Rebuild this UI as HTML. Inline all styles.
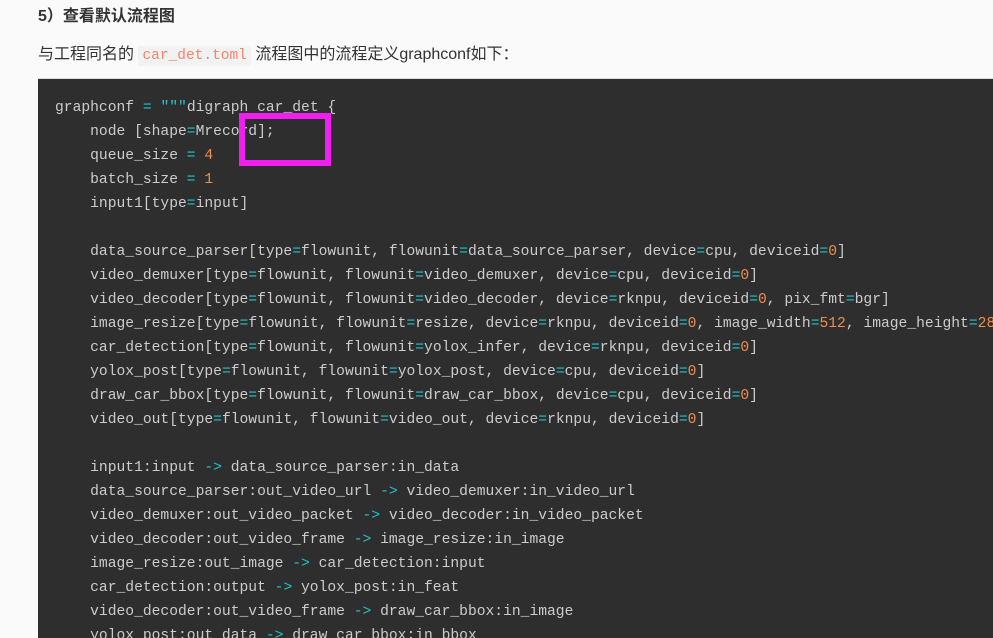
<!DOCTYPE html>
<html><head><meta charset="utf-8"><style>
html,body{margin:0;width:993px;height:638px;overflow:hidden}
body{background:#fafafa;font-family:"Liberation Sans","Noto Sans CJK SC",sans-serif;position:relative}
h4{position:absolute;left:38px;top:5px;margin:0;font-size:16px;font-weight:bold;color:#333;line-height:24px}
p{position:absolute;left:38px;top:43px;margin:0;font-size:16px;color:#333;line-height:24px}
p code{font-family:"Liberation Mono",monospace;color:#f5846a;background:#f2f2f2;padding:2px 4px;font-size:14.5px}
pre{position:absolute;left:38px;top:78px;width:960px;height:560px;margin:0;background:#2e2e2e;border-top:1px solid #ddd;padding:17px 0 0 17px;box-sizing:border-box;font-family:"Liberation Mono",monospace;font-size:14.65px;line-height:24px;color:#cccccc;white-space:pre;overflow:hidden}
.o{color:#f08d49}.t{color:#1fc6c6}
.box{position:absolute;left:239px;top:113px;width:80px;height:41px;border:6px solid #f01ff0}
</style></head><body>
<h4>5）查看默认流程图</h4>
<p>与工程同名的 <code>car_det.toml</code> 流程图中的流程定义graphconf如下：</p>
<pre>graphconf <span class="t">=</span> <span class="t">"""</span>digraph car_det {
    node [shape<span class="t">=</span>Mrecord];
    queue_size <span class="t">=</span> <span class="o">4</span>
    batch_size <span class="t">=</span> <span class="o">1</span>
    input1[type<span class="t">=</span>input]

    data_source_parser[type<span class="t">=</span>flowunit, flowunit<span class="t">=</span>data_source_parser, device<span class="t">=</span>cpu, deviceid<span class="t">=</span><span class="o">0</span>]
    video_demuxer[type<span class="t">=</span>flowunit, flowunit<span class="t">=</span>video_demuxer, device<span class="t">=</span>cpu, deviceid<span class="t">=</span><span class="o">0</span>]
    video_decoder[type<span class="t">=</span>flowunit, flowunit<span class="t">=</span>video_decoder, device<span class="t">=</span>rknpu, deviceid<span class="t">=</span><span class="o">0</span>, pix_fmt<span class="t">=</span>bgr]
    image_resize[type<span class="t">=</span>flowunit, flowunit<span class="t">=</span>resize, device<span class="t">=</span>rknpu, deviceid<span class="t">=</span><span class="o">0</span>, image_width<span class="t">=</span><span class="o">512</span>, image_height<span class="t">=</span><span class="o">288</span>]
    car_detection[type<span class="t">=</span>flowunit, flowunit<span class="t">=</span>yolox_infer, device<span class="t">=</span>rknpu, deviceid<span class="t">=</span><span class="o">0</span>]
    yolox_post[type<span class="t">=</span>flowunit, flowunit<span class="t">=</span>yolox_post, device<span class="t">=</span>cpu, deviceid<span class="t">=</span><span class="o">0</span>]
    draw_car_bbox[type<span class="t">=</span>flowunit, flowunit<span class="t">=</span>draw_car_bbox, device<span class="t">=</span>cpu, deviceid<span class="t">=</span><span class="o">0</span>]
    video_out[type<span class="t">=</span>flowunit, flowunit<span class="t">=</span>video_out, device<span class="t">=</span>rknpu, deviceid<span class="t">=</span><span class="o">0</span>]

    input1:input <span class="t">-&gt;</span> data_source_parser:in_data
    data_source_parser:out_video_url <span class="t">-&gt;</span> video_demuxer:in_video_url
    video_demuxer:out_video_packet <span class="t">-&gt;</span> video_decoder:in_video_packet
    video_decoder:out_video_frame <span class="t">-&gt;</span> image_resize:in_image
    image_resize:out_image <span class="t">-&gt;</span> car_detection:input
    car_detection:output <span class="t">-&gt;</span> yolox_post:in_feat
    video_decoder:out_video_frame <span class="t">-&gt;</span> draw_car_bbox:in_image
    yolox_post:out_data <span class="t">-&gt;</span> draw_car_bbox:in_bbox
</pre>
<div class="box"></div>
</body></html>
